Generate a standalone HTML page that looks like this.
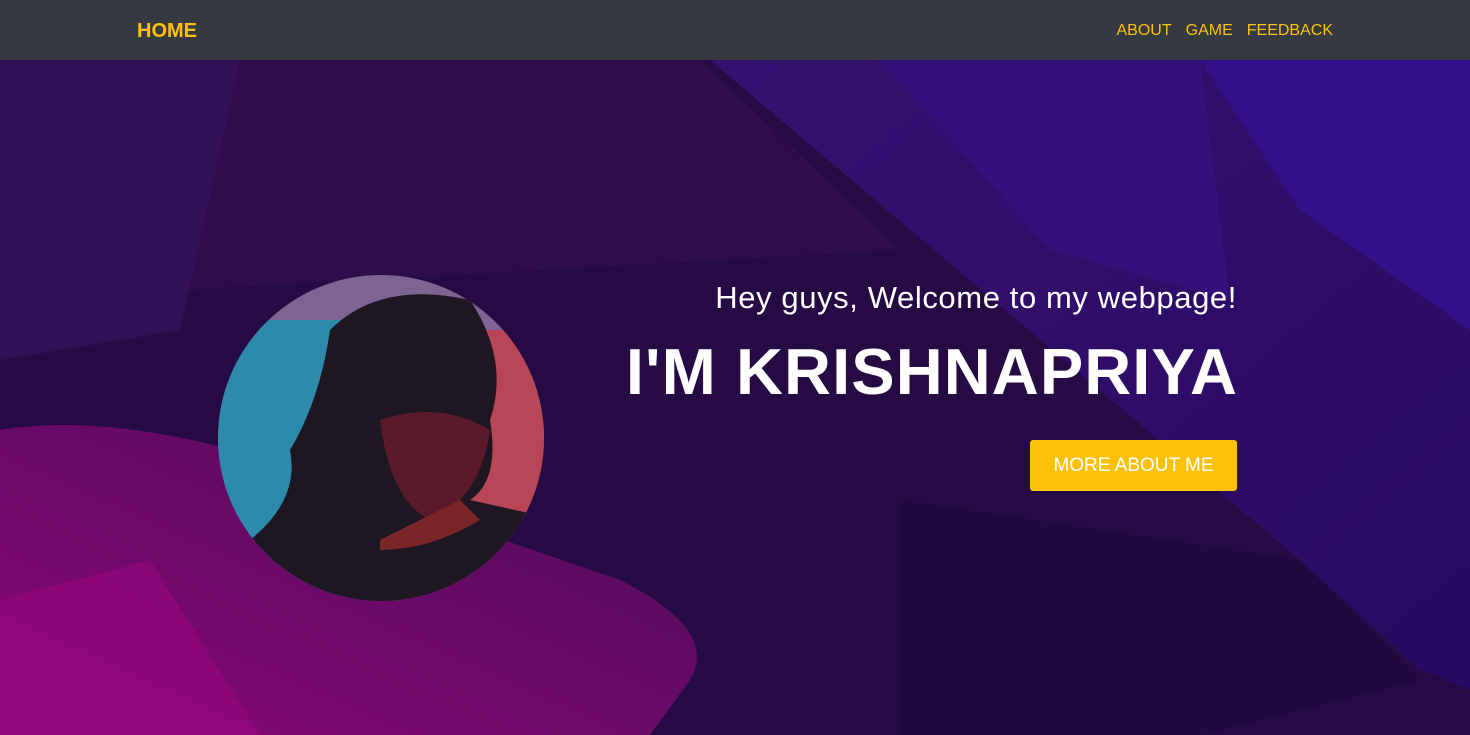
<!DOCTYPE html>
<html><head><meta charset="utf-8"><style>
*{margin:0;padding:0;box-sizing:border-box}
body{width:1470px;height:735px;overflow:hidden;font-family:"Liberation Sans",sans-serif;background:#2a0b48;position:relative}
nav{position:absolute;top:0;left:0;width:1470px;height:60px;background:#343a40;z-index:5}
.home{position:absolute;left:137px;top:20px;color:#ffc107;font-weight:bold;font-size:20px}
.links{position:absolute;right:137px;top:22px;color:#ffc107;font-size:16px}
.links span{margin-left:14px}
.bg{position:absolute;top:60px;left:0}
.h1{position:absolute;right:233px;top:280px;color:#fff;font-size:31px;letter-spacing:0.6px}
.h2{position:absolute;right:232px;top:334px;color:#fff;font-size:65px;font-weight:bold;letter-spacing:1.1px}
.btn{position:absolute;left:1030px;top:440px;width:207px;height:51px;background:#ffc107;border-radius:3px;color:#fff;font-size:19px;text-align:center;line-height:52px}
</style></head><body>
<nav><div class="home">HOME</div><div class="links"><span>ABOUT</span><span>GAME</span><span>FEEDBACK</span></div></nav>
<svg class="bg" width="1470" height="675" viewBox="0 60 1470 675">
<defs>
<linearGradient id="m" x1="0" y1="1" x2="1" y2="0"><stop offset="0" stop-color="#8a0878"/><stop offset="1" stop-color="#4a0c58"/></linearGradient>
<linearGradient id="v" x1="0" y1="0" x2="1" y2="1"><stop offset="0" stop-color="#351070"/><stop offset="1" stop-color="#280a62"/></linearGradient>
<clipPath id="c"><circle cx="381" cy="438" r="163"/></clipPath>
</defs>
<rect x="0" y="60" width="1470" height="675" fill="#260a44"/>
<polygon points="0,60 700,60 900,250 0,300" fill="#2f0d4c"/>
<polygon points="0,60 240,60 180,330 0,360" fill="#321056"/>
<polygon points="710,60 1470,60 1470,690 1420,670 1300,560" fill="url(#v)"/>
<polygon points="880,60 1200,60 1230,300 1050,250" fill="#35107a"/>
<polygon points="1200,60 1470,60 1470,330 1300,210" fill="#331088"/>
<polygon points="900,500 1300,560 1420,680 1200,735 900,735" fill="#210940"/>
<path d="M0,430 Q120,410 300,470 L620,580 Q720,630 690,680 L650,735 L0,735 Z" fill="url(#m)"/>
<polygon points="0,600 150,560 260,735 0,735" fill="#a00682" opacity="0.5"/>
<g clip-path="url(#c)">
<rect x="200" y="270" width="360" height="340" fill="#7e6492"/>
<rect x="200" y="320" width="140" height="280" fill="#2e8aac"/>
<rect x="440" y="330" width="120" height="200" fill="#b84656"/>
<path d="M330,330 Q380,280 470,300 Q510,360 490,420 Q500,480 470,500 L560,520 L560,610 L200,610 L250,540 Q300,500 290,450 Q320,400 330,330 Z" fill="#1e1620"/>
<path d="M380,420 Q440,400 490,430 Q480,500 430,520 Q390,500 380,420Z" fill="#6a1c2c" opacity="0.8"/>
<path d="M380,540 Q420,520 460,500 L480,520 Q430,550 380,550Z" fill="#7a2628"/>
</g>
</svg>
<div class="h1">Hey guys, Welcome to my webpage!</div>
<div class="h2">I'M KRISHNAPRIYA</div>
<div class="btn">MORE ABOUT ME</div>
</body></html>
